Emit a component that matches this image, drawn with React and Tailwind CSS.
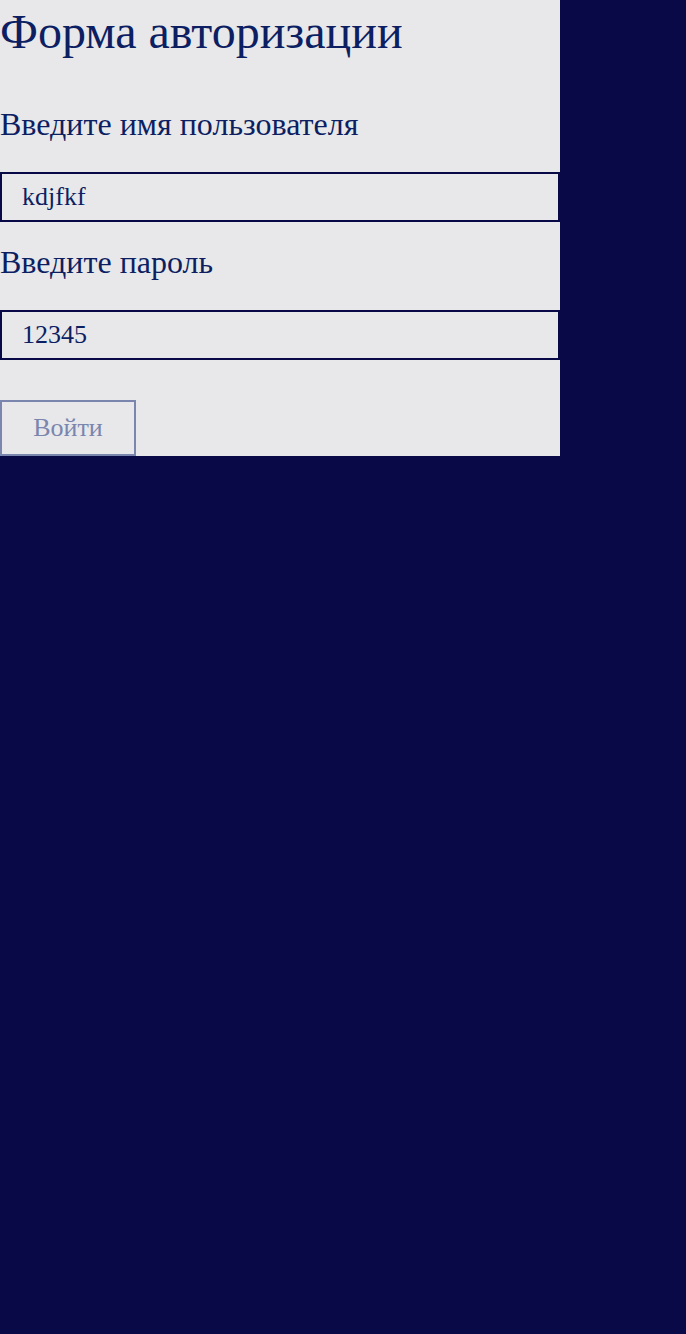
export default function App() {
    return (
        <div className="min-h-[1334px] bg-[#0a0948] font-['Liberation_Serif',serif] text-[#0d1f63]">
            <div className="w-[560px] bg-[#e8e8ea] flex flex-col">
                {/* Заголовок */}
                <h1 className="text-[48px] leading-[64px] m-0">Форма авторизации</h1>

                <label className="mt-[40px] text-[32px] leading-[40px]">Введите имя пользователя</label>
                <input
                    defaultValue="kdjfkf"
                    className="mt-[28px] h-[50px] border-2 border-[#0a0948] bg-[#e8e8ea] px-[20px] text-[26px] text-[#0d1f63] outline-none"
                />

                <label className="mt-[20px] text-[32px] leading-[40px]">Введите пароль</label>
                <input
                    defaultValue="12345"
                    className="mt-[28px] h-[50px] border-2 border-[#0a0948] bg-[#e8e8ea] px-[20px] text-[26px] text-[#0d1f63] outline-none"
                />

                <div className="mt-[40px]">
                    <button className="w-[136px] h-[56px] pb-[2px] border-2 border-[#7a86ae] text-[26px] text-[#7a86ae]">
                        Войти
                    </button>
                </div>
            </div>
        </div>
    );
}
